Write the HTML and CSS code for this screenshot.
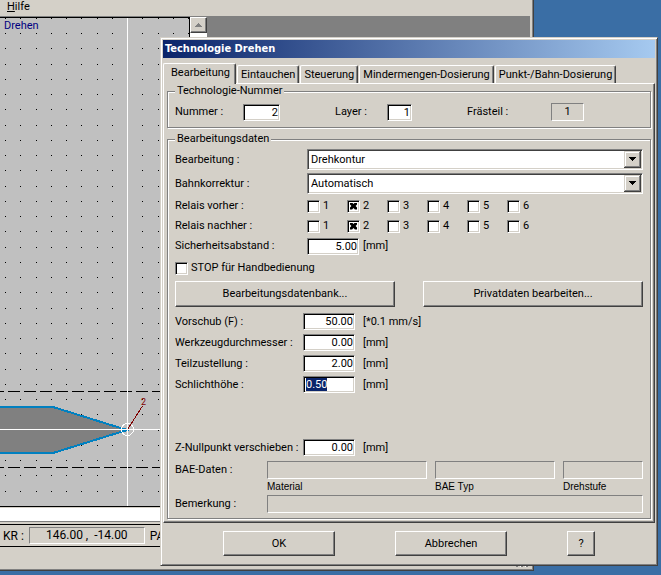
FILE: index.html
```
<!DOCTYPE html>
<html lang="de">
<head>
<meta charset="utf-8">
<title>Technologie Drehen</title>
<link rel="stylesheet" href="styles.css">
</head>
<body>
<div class="app">
  <nav class="menubar"><button type="button" class="menu-item"><u>H</u>ilfe</button></nav>
  <div class="workspace">
    <div class="drawing">
      <svg class="plot" aria-hidden="true">
        <defs>
          <pattern id="dots" width="61" height="61" patternUnits="userSpaceOnUse" shape-rendering="crispEdges">
            <path d="M5 15h1v1h-1zM20 15h1v1h-1zM36 15h1v1h-1zM51 15h1v1h-1zM5 30h1v1h-1zM20 30h1v1h-1zM36 30h1v1h-1zM51 30h1v1h-1zM5 46h1v1h-1zM20 46h1v1h-1zM36 46h1v1h-1zM51 46h1v1h-1zM5 0h1v1h-1zM20 0h1v1h-1zM36 0h1v1h-1zM51 0h1v1h-1z"/>
          </pattern>
        </defs>
        <rect width="100%" height="100%" fill="url(#dots)"/>
        <g shape-rendering="crispEdges">
          <path d="M0 373.5H189M0 449.5H189" stroke="#000" stroke-dasharray="12 4" stroke-dashoffset="8"/>
          <path d="M-4 389H53L127 412L53 435H-4z" fill="#808080" stroke="#0080c0" stroke-width="2"/>
          <path d="M127.5 0V600M0 411.5H189" stroke="#fff"/>
          <circle cx="127.500" cy="411.500" r="6" fill="none" stroke="#fff"/>
          <path d="M127.500 411.500L142.500 388" stroke="#800000"/>
        </g>
        <text x="141" y="387" class="point-label">2</text>
      </svg>
      <span class="view-name">Drehen</span>
    </div>
    <div class="scrollbar"><button type="button" class="scroll-up" aria-label="Nach oben"><svg width="7" height="4" shape-rendering="crispEdges"><path d="M3 0h1v1h1v1h1v1h1v1H0V3h1V2h1V1h1z" fill="#808080"/></svg></button></div>
  </div>
  <div class="message"></div>
  <div class="status"><span>KR :</span><output class="coords">146.00 ,&nbsp; -14.00</output><span>PA :</span></div>
  <div class="footer"><svg width="14" height="14" shape-rendering="crispEdges" aria-hidden="true"><path d="M0 13L13 0M5 13L13 5M10 13L13 10" stroke="#808080" stroke-width="2"/><path d="M-1 13L13 -1M4 13L13 4M9 13L13 9" stroke="#fff"/></svg></div>
</div>

<form class="dialog">
  <h1 class="title">Technologie Drehen</h1>
  <div class="tabs" role="tablist">
    <button type="button" role="tab" aria-selected="true" class="tab active">Bearbeitung</button>
    <button type="button" role="tab" class="tab">Eintauchen</button>
    <button type="button" role="tab" class="tab">Steuerung</button>
    <button type="button" role="tab" class="tab">Mindermengen-Dosierung</button>
    <button type="button" role="tab" class="tab">Punkt-/Bahn-Dosierung</button>
  </div>
  <div class="panel">
    <fieldset>
      <legend>Technologie-Nummer</legend>
      <div class="number-row">
        <label for="nummer">Nummer :</label><input id="nummer" class="field w36" value="2">
        <label for="layer">Layer :</label><input id="layer" class="field w24" value="1">
        <span>Frästeil :</span><output class="sunken part">1</output>
      </div>
    </fieldset>
    <fieldset>
      <legend>Bearbeitungsdaten</legend>
      <div class="select-row">
        <label for="bearbeitung">Bearbeitung :</label>
        <div class="combo"><select id="bearbeitung"><option>Drehkontur</option></select><svg class="arrow" width="17" height="17" shape-rendering="crispEdges"><path d="M5 6h7v1h-1v1h-1v1h-1v1h-1v-1h-1v-1h-1v-1h-1z"/></svg></div>
      </div>
      <div class="select-row">
        <label for="bahn">Bahnkorrektur :</label>
        <div class="combo"><select id="bahn"><option>Automatisch</option></select><svg class="arrow" width="17" height="17" shape-rendering="crispEdges"><path d="M5 6h7v1h-1v1h-1v1h-1v1h-1v-1h-1v-1h-1v-1h-1z"/></svg></div>
      </div>
      <div class="relay-row">
        <span>Relais vorher :</span>
        <label><input type="checkbox">1</label><label><input type="checkbox" checked>2</label><label><input type="checkbox">3</label><label><input type="checkbox">4</label><label><input type="checkbox">5</label><label><input type="checkbox">6</label>
      </div>
      <div class="relay-row">
        <span>Relais nachher :</span>
        <label><input type="checkbox">1</label><label><input type="checkbox" checked>2</label><label><input type="checkbox">3</label><label><input type="checkbox">4</label><label><input type="checkbox">5</label><label><input type="checkbox">6</label>
      </div>
      <div class="distance-row"><label for="abstand">Sicherheitsabstand :</label><input id="abstand" class="field w52" value="5.00"><span>[mm]</span></div>
      <label class="stop-row"><input type="checkbox">STOP für Handbedienung</label>
      <div class="button-row">
        <button type="button" class="btn">Bearbeitungsdatenbank...</button>
        <button type="button" class="btn">Privatdaten bearbeiten...</button>
      </div>
      <div class="value-row"><label for="vorschub">Vorschub (F) :</label><input id="vorschub" class="field w52" value="50.00"><span>[*0.1 mm/s]</span></div>
      <div class="value-row"><label for="durchmesser">Werkzeugdurchmesser :</label><input id="durchmesser" class="field w52" value="0.00"><span>[mm]</span></div>
      <div class="value-row"><label for="zustellung">Teilzustellung :</label><input id="zustellung" class="field w52" value="2.00"><span>[mm]</span></div>
      <div class="value-row"><label for="schlicht">Schlichthöhe :</label><input id="schlicht" class="field w52 editing" value="0.50" autofocus><span>[mm]</span></div>
      <div class="value-row zero"><label for="znull">Z-Nullpunkt verschieben :</label><input id="znull" class="field w52" value="0.00"><span>[mm]</span></div>
      <div class="bae">
        <span>BAE-Daten :</span>
        <output class="sunken"></output><output class="sunken"></output><output class="sunken"></output>
        <small class="first">Material</small><small>BAE Typ</small><small>Drehstufe</small>
        <span>Bemerkung :</span>
        <output class="sunken wide"></output>
      </div>
    </fieldset>
  </div>
  <div class="actions">
    <button type="button" class="btn main">OK</button>
    <button type="button" class="btn main">Abbrechen</button>
    <button type="button" class="btn help">?</button>
  </div>
</form>
<script src="script.js"></script>
</body>
</html>
```
FILE: styles.css
```
:root {
  --face: #d4d0c8;
  --shade: #808080;
  --dark: #404040;
}

* { box-sizing: border-box; }

body {
  margin: 0;
  position: relative;
  min-height: 100vh;
  background: #3a6ea5;
  font: 11px/14px Roboto, "Liberation Sans", sans-serif;
  color: #000;
  overflow: hidden;
}

button, input, select { font: inherit; color: inherit; margin: 0; border-radius: 0; }

/* Main window */
.app {
  display: flex;
  flex-direction: column;
  height: calc(100vh - 4px);
  margin-right: 127px;
  background: var(--face);
  border: solid var(--dark);
  border-width: 0 1px 1px 0;
  box-shadow: inset -1px -1px var(--shade);
  padding: 0 3px 2px 0;
}
.menubar { height: 16px; padding-left: 7px; }
.menu-item { border: 0; padding: 0; background: none; display: block; line-height: 14px; }
.workspace { flex: 1; display: flex; background: #808080; padding-top: 1px; min-height: 0; }
.drawing {
  position: relative;
  width: 190px;
  background: #c0c0c0;
  border: solid #000;
  border-width: 1px 1px 1px 0;
}
.plot { display: block; width: 100%; height: 100%; }
.point-label { font-size: 9px; fill: #800000; }
.view-name { position: absolute; left: 4px; top: 1px; font-size: 11px; color: #000080; }
.scrollbar { width: 17px; background: #fff; }
.scroll-up {
  display: grid;
  place-items: center;
  width: 17px;
  height: 16px;
  padding: 0;
  background: var(--face);
  border: 1px solid;
  border-color: #fff var(--dark) var(--dark) #fff;
  box-shadow: inset -1px -1px var(--shade);
}
.message {
  height: 17px;
  background: #fff;
  border: solid var(--face);
  border-width: 1px 0 2px;
  box-shadow: inset 0 -1px var(--shade);
}
.status {
  display: flex;
  align-items: center;
  gap: 5px;
  height: 23px;
  padding-left: 3px;
  border: solid #000;
  border-width: 1px 0;
  font-size: 12px;
  white-space: nowrap;
}
.coords {
  width: 116px;
  height: 17px;
  text-align: center;
  border: 1px solid;
  border-color: var(--shade) #fff #fff var(--shade);
}
.footer { display: flex; justify-content: flex-end; align-items: flex-end; height: 21px; }

/* Dialog */
.dialog {
  position: absolute;
  left: 160px;
  right: 3px;
  top: 37px;
  padding: 2px;
  background: var(--face);
  border: 1px solid;
  border-color: var(--face) var(--dark) var(--dark) var(--face);
  box-shadow: inset 1px 1px #fff, inset -1px -1px var(--shade);
}
.title {
  margin: 0;
  height: 18px;
  padding-left: 2px;
  font: bold 11px/18px "DejaVu Sans Condensed", "DejaVu Sans", sans-serif;
  color: #fff;
  background: linear-gradient(to right, #0a246a, #a6caf0);
}
.tabs { display: flex; align-items: flex-end; gap: 1px; height: 25px; }
.tab {
  height: 18px;
  padding: 0 3px;
  line-height: 16px;
  background: var(--face);
  border: 1px solid;
  border-color: #fff var(--dark) transparent #fff;
  border-bottom: 0;
  border-radius: 2px 2px 0 0;
  box-shadow: inset -1px 0 var(--shade);
  white-space: nowrap;
}
.tab.active { height: 21px; margin-bottom: -1px; padding: 0 5px 2px 7px; z-index: 1; }
.panel {
  padding: 0 2px 3px 3px;
  border: 1px solid;
  border-color: #fff var(--dark) var(--dark) #fff;
  box-shadow: inset -1px -1px var(--shade);
}
fieldset {
  min-width: 0;
  margin: 0 1px 4px 0;
  padding: 0 7px 6px;
  border: 1px solid var(--shade);
  box-shadow: inset 1px 1px #fff, 1px 1px #fff;
}
fieldset:last-child { margin-bottom: 0; padding-bottom: 5px; }
legend { padding: 0 2px; background: var(--face); line-height: 14px; }
label, span { white-space: nowrap; }

.field {
  height: 17px;
  padding: 0 1px;
  text-align: right;
  background: #fff;
  border: 1px solid;
  border-color: var(--shade) #fff #fff var(--shade);
  box-shadow: inset 1px 1px #000, inset -1px -1px var(--face);
  outline: 0;
}
.w24 { width: 25px; }
.w36 { width: 37px; }
.w52 { width: 52px; }
.editing { text-align: left; padding-left: 2px; }
.editing::selection { background: #0a246a; color: #fff; }
.sunken {
  height: 18px;
  border: 1px solid;
  border-color: var(--shade) #fff #fff var(--shade);
}

.number-row {
  display: grid;
  grid-template-columns: 68px 92px 52px 80px 84px 1fr;
  align-items: center;
  padding-top: 5px;
}
.part { width: 33px; text-align: center; line-height: 16px; }

.select-row {
  display: grid;
  grid-template-columns: 132px 1fr;
  align-items: center;
  padding-top: 3px;
}
.combo { position: relative; }
.combo select {
  display: block;
  width: 100%;
  height: 21px;
  padding: 0 20px 0 3px;
  appearance: none;
  background: #fff;
  border: 1px solid;
  border-color: var(--shade) #fff #fff var(--shade);
  box-shadow: inset 1px 1px var(--dark), inset -1px -1px var(--face);
}
.arrow {
  position: absolute;
  right: 2px;
  top: 2px;
  background: var(--face);
  box-shadow: inset -1px -1px var(--dark), inset 1px 1px var(--face), inset -2px -2px var(--shade), inset 2px 2px #fff;
  pointer-events: none;
}
.relay-row {
  display: grid;
  grid-template-columns: 132px repeat(6, 40px);
  align-items: center;
  height: 20px;
}
.select-row + .relay-row { margin-top: 2px; }
.relay-row label, .stop-row { display: flex; align-items: center; gap: 3px; }
input[type="checkbox"] {
  appearance: none;
  width: 13px;
  height: 13px;
  background: #fff;
  border: 1px solid;
  border-color: var(--shade) #fff #fff var(--shade);
  box-shadow: inset 1px 1px #000, inset -1px -1px var(--face);
}
input[type="checkbox"]:checked::before {
  content: "";
  display: block;
  width: 7px;
  height: 7px;
  margin: 2px;
  background: #000;
  clip-path: polygon(0 0, 30% 0, 50% 20%, 70% 0, 100% 0, 100% 30%, 80% 50%, 100% 70%, 100% 100%, 70% 100%, 50% 80%, 30% 100%, 0 100%, 0 70%, 20% 50%, 0 30%);
}
.distance-row {
  display: grid;
  grid-template-columns: 132px 56px 1fr;
  align-items: center;
  height: 20px;
}
.stop-row { height: 20px; margin-top: 2px; }
.button-row {
  display: grid;
  grid-template-columns: 1fr 1fr;
  gap: 28px;
  margin: 3px 0 4px;
}
.btn {
  height: 26px;
  padding: 0;
  background: var(--face);
  border: 1px solid;
  border-color: #fff var(--dark) var(--dark) #fff;
  box-shadow: inset -1px -1px var(--shade);
}
.value-row {
  display: grid;
  grid-template-columns: 128px 60px 1fr;
  align-items: center;
  height: 21px;
}
.zero { margin: 42px 0 3px; }
.bae {
  display: grid;
  grid-template-columns: 84px 4fr 3fr 2fr;
  column-gap: 8px;
  align-items: center;
}
.bae small { font: 10px/16px "Liberation Sans", sans-serif; }
.bae .first { grid-column: 2; }
.bae .wide { grid-column: 2 / -1; }

.actions {
  display: flex;
  justify-content: space-between;
  padding: 8px 60px 7px;
}
.actions .btn { height: 25px; }
.main { width: 112px; }
.actions .help { width: 28px; }
```
FILE: script.js
```
const field = document.getElementById("schlicht");
field.focus();
field.select();
```
